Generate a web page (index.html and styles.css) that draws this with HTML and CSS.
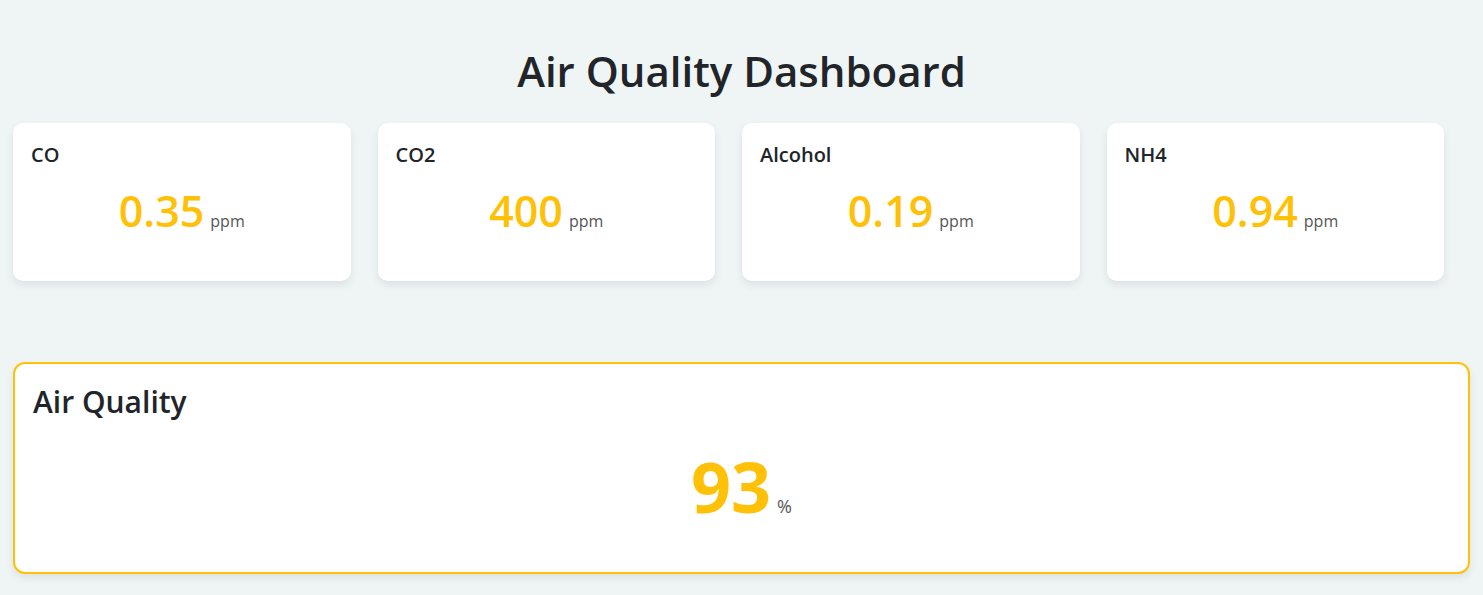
FILE: index.html
```html
<!DOCTYPE html>
<html>
<head>
<meta charset="utf-8">
<link rel="stylesheet" href="styles.css">
</head>
<body>
<div class="page">
  <h1 class="title">Air Quality Dashboard</h1>
  <div class="grid">
    <div class="card">
      <div class="label">CO</div>
      <div class="reading"><span class="value">0.35</span><span class="unit">ppm</span></div>
    </div>
    <div class="card">
      <div class="label">CO2</div>
      <div class="reading"><span class="value">400</span><span class="unit">ppm</span></div>
    </div>
    <div class="card">
      <div class="label">Alcohol</div>
      <div class="reading"><span class="value">0.19</span><span class="unit">ppm</span></div>
    </div>
    <div class="card">
      <div class="label">NH4</div>
      <div class="reading"><span class="value">0.94</span><span class="unit">ppm</span></div>
    </div>
  </div>
  <div class="aq-card">
    <div class="aq-label">Air Quality</div>
    <div class="aq-reading"><span class="aq-value">93</span><span class="unit aq-unit">%</span></div>
  </div>
</div>
</body>
</html>
```

FILE: styles.css
```css
html, body {
  margin: 0;
  padding: 0;
  background: #eff4f4;
  font-family: "Open Sans", "Noto Sans", sans-serif;
  color: #212529;
}
.page {
  padding: 39px 13px 20px 13px;
}
.title {
  margin: 0 0 20px 0;
  text-align: center;
  font-size: 42px;
  font-weight: 600;
  line-height: 64px;
}
.grid {
  display: grid;
  grid-template-columns: repeat(4, 337.5px);
  column-gap: 27px;
}
.card {
  background: #fff;
  border-radius: 10px;
  box-shadow: 0 4px 8px rgba(0, 0, 0, 0.08);
  height: 158px;
  box-sizing: border-box;
  padding: 20px 18px;
}
.label {
  font-size: 20px;
  font-weight: 600;
  line-height: 24px;
}
.reading {
  text-align: center;
  margin-top: 16px;
}
.value {
  font-size: 43px;
  font-weight: 600;
  color: #ffc107;
  line-height: 56px;
}
.unit {
  font-size: 16px;
  color: #555;
  margin-left: 6px;
}
.aq-unit {
  font-size: 18px;
}
.aq-card {
  margin-top: 81px;
  background: #fff;
  border: 2px solid #ffc107;
  border-radius: 12px;
  box-shadow: 0 4px 8px rgba(0, 0, 0, 0.08);
  height: 212px;
  box-sizing: border-box;
  padding: 18px 18px;
}
.aq-label {
  font-size: 30px;
  font-weight: 600;
  line-height: 40px;
}
.aq-reading {
  text-align: center;
  margin-top: 24px;
}
.aq-value {
  font-size: 70px;
  font-weight: 700;
  color: #ffc107;
  line-height: 80px;
}
```
